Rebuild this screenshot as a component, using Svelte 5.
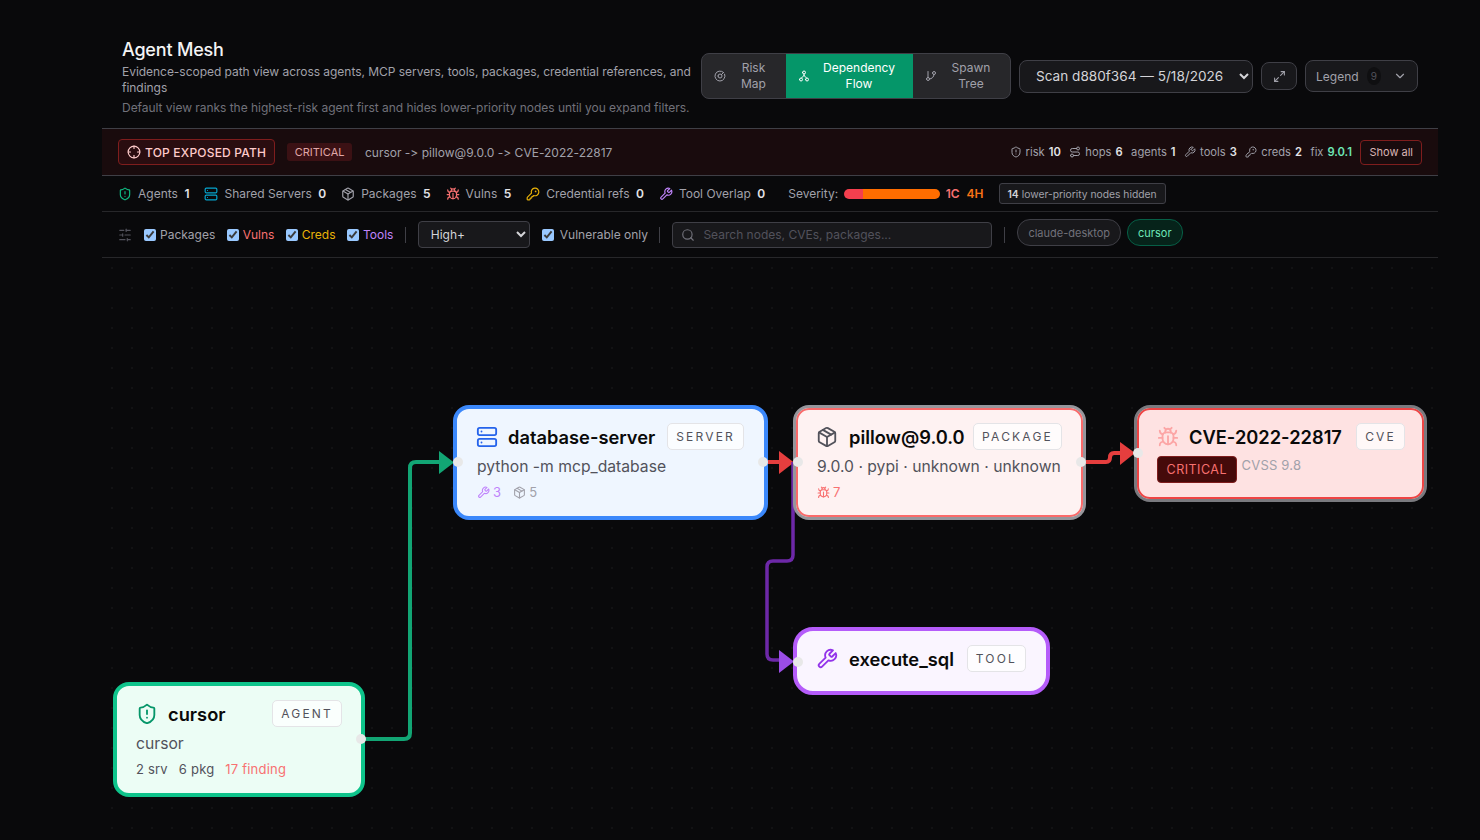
<script>
  const c = (x, y, r) => `M${x - r} ${y}a${r} ${r} 0 1 0 ${2 * r} 0a${r} ${r} 0 1 0 ${-2 * r} 0`;

  const icons = {
    shield: ['M20 13c0 5-3.5 7.5-7.66 8.95a1 1 0 0 1-.67-.01C7.5 20.5 4 18 4 13V6a1 1 0 0 1 1-1c2 0 4.5-1.2 6.24-2.72a1.17 1.17 0 0 1 1.52 0C14.51 3.81 17 5 19 5a1 1 0 0 1 1 1z', 'M12 8v4', 'M12 16h.01'],
    server: ['M4 2h16a2 2 0 0 1 2 2v4a2 2 0 0 1-2 2H4a2 2 0 0 1-2-2V4a2 2 0 0 1 2-2z', 'M4 14h16a2 2 0 0 1 2 2v4a2 2 0 0 1-2 2H4a2 2 0 0 1-2-2v-4a2 2 0 0 1 2-2z', 'M6 6h.01', 'M6 18h.01'],
    pkg: ['M11 21.73a2 2 0 0 0 2 0l7-4A2 2 0 0 0 21 16V8a2 2 0 0 0-1-1.73l-7-4a2 2 0 0 0-2 0l-7 4A2 2 0 0 0 3 8v8a2 2 0 0 0 1 1.73z', 'M12 22V12', 'M3.29 7 12 12l8.71-5', 'm7.5 4.27 9 5.15'],
    bug: ['m8 2 1.88 1.88', 'M14.12 3.88 16 2', 'M9 7.13v-1a3.003 3.003 0 1 1 6 0v1', 'M12 20c-3.3 0-6-2.7-6-6v-3a4 4 0 0 1 4-4h4a4 4 0 0 1 4 4v3c0 3.3-2.7 6-6 6', 'M12 20v-9', 'M6.53 9C4.6 8.8 3 7.1 3 5', 'M6 13H2', 'M3 21c0-2.1 1.7-3.9 3.8-4', 'M20.97 5c0 2.1-1.6 3.8-3.5 4', 'M22 13h-4', 'M17.2 17c2.1.1 3.8 1.9 3.8 4'],
    key: ['M2.586 17.414A2 2 0 0 0 2 18.828V21a1 1 0 0 0 1 1h3a1 1 0 0 0 1-1v-1a1 1 0 0 1 1-1h1a1 1 0 0 0 1-1v-1a1 1 0 0 1 1-1h.172a2 2 0 0 0 1.414-.586l.814-.814a6.5 6.5 0 1 0-4-4z', c(16.5, 7.5, 0.5)],
    wrench: ['M14.7 6.3a1 1 0 0 0 0 1.4l1.6 1.6a1 1 0 0 0 1.4 0l3.77-3.77a6 6 0 0 1-7.94 7.94l-6.91 6.91a2.12 2.12 0 0 1-3-3l6.91-6.91a6 6 0 0 1 7.94-7.94l-3.76 3.76z'],
    sliders: ['M21 4h-7', 'M10 4H3', 'M21 12h-9', 'M8 12H3', 'M21 20h-5', 'M12 20H3', 'M14 2v4', 'M8 10v4', 'M16 18v4'],
    search: [c(11, 11, 8), 'm21 21-4.3-4.3'],
    crosshair: [c(12, 12, 10), 'M22 12h-4', 'M6 12H2', 'M12 6V2', 'M12 22v-4'],
    route: [c(6, 19, 3), 'M9 19h8.5a3.5 3.5 0 0 0 0-7h-11a3.5 3.5 0 0 1 0-7H15', c(18, 5, 3)],
    radar: ['M19.07 4.93A10 10 0 1 0 21.31 8.35', c(12, 12, 4), 'm14.500 9.500 4.500-4.500'],
    flow: [c(12, 5, 3), c(6, 19, 3), c(18, 19, 3), 'M12 8v3', 'M12 11l-5 5', 'M12 11l5 5'],
    branch: ['M6 3v12', c(18, 6, 3), c(6, 18, 3), 'M18 9a9 9 0 0 1-9 9'],
    expand: ['M15 3h6v6', 'M9 21H3v-6', 'M21 3l-7 7', 'M3 21l7-7'],
    chevron: ['m6 9 6 6 6-6']
  };

  const tabs = [
    { label: 'Risk Map', icon: 'radar', width: 84 },
    { label: 'Dependency Flow', icon: 'flow', width: 127, active: true },
    { label: 'Spawn Tree', icon: 'branch', width: 97 }
  ];

  const pathStats = [
    { icon: 'shield', label: 'risk', value: '10' },
    { icon: 'route', label: 'hops', value: '6' },
    { label: 'agents', value: '1' },
    { icon: 'wrench', label: 'tools', value: '3' },
    { icon: 'key', label: 'creds', value: '2' }
  ];

  const stats = [
    { icon: 'shield', color: '#10b981', label: 'Agents', value: 1 },
    { icon: 'server', color: '#06a5cf', label: 'Shared Servers', value: 0 },
    { icon: 'pkg', color: '#a1a1aa', label: 'Packages', value: 5 },
    { icon: 'bug', color: '#f87171', label: 'Vulns', value: 5 },
    { icon: 'key', color: '#eab308', label: 'Credential refs', value: 0 },
    { icon: 'wrench', color: '#c084fc', label: 'Tool Overlap', value: 0 }
  ];

  const layers = [
    { label: 'Packages', cls: '' },
    { label: 'Vulns', cls: 'red' },
    { label: 'Creds', cls: 'yellow' },
    { label: 'Tools', cls: 'purple' }
  ];
</script>

{#snippet icon(name, size = 14)}
  <svg class="ic" width={size} height={size} viewBox="0 0 24 24" fill="none" stroke="currentColor" stroke-width="2" stroke-linecap="round" stroke-linejoin="round">
    {#each icons[name] as d}<path {d} />{/each}
  </svg>
{/snippet}

<div class="page">
  <header class="head">
    <div class="intro">
      <h1>Agent Mesh</h1>
      <p>Evidence-scoped path view across agents, MCP servers, tools, packages, credential references, and findings</p>
      <p class="hint">Default view ranks the highest-risk agent first and hides lower-priority nodes until you expand filters.</p>
    </div>
    <div class="controls">
      <div class="tabs">
        {#each tabs as tab}
          <button class="tab" class:active={tab.active} style="width: {tab.width}px">
            {@render icon(tab.icon, 12)}
            <span>{tab.label}</span>
          </button>
        {/each}
      </div>
      <select class="scan">
        <option>Scan d880f364 — 5/18/2026</option>
      </select>
      <button class="square">{@render icon('expand', 13)}</button>
      <button class="legend">
        Legend <span class="count">9</span>
        {@render icon('chevron', 14)}
      </button>
    </div>
  </header>

  <section class="exposed">
    <span class="top">{@render icon('crosshair', 14)} TOP EXPOSED PATH</span>
    <span class="crit">CRITICAL</span>
    <span class="trail">cursor -&gt; pillow@9.0.0 -&gt; CVE-2022-22817</span>
    <div class="path-stats">
      {#each pathStats as s}
        <span class="ps">
          {#if s.icon}{@render icon(s.icon, 12)}{/if}
          {s.label} <b>{s.value}</b>
        </span>
      {/each}
      <span class="ps">fix <b class="fix">9.0.1</b></span>
      <button class="show">Show all</button>
    </div>
  </section>

  <section class="stats">
    {#each stats as s}
      <span class="stat">
        <span class="stat-ic" style="color: {s.color}">{@render icon(s.icon, 14)}</span>
        {s.label} <b>{s.value}</b>
      </span>
    {/each}
    <span class="sev">
      Severity:
      <span class="bar"><i class="bar-c"></i><i class="bar-h"></i></span>
      <b class="c1">1C</b> <b class="h4">4H</b>
    </span>
    <span class="hidden-note"><b>14</b> lower-priority nodes hidden</span>
  </section>

  <section class="filters">
    <span class="slide">{@render icon('sliders', 14)}</span>
    {#each layers as l}
      <label class="check {l.cls}"><input type="checkbox" checked /> {l.label}</label>
    {/each}
    <span class="sep"></span>
    <select class="sev-select"><option>High+</option></select>
    <label class="check wide"><input type="checkbox" checked /> Vulnerable only</label>
    <span class="sep"></span>
    <div class="search">
      {@render icon('search', 14)}
      <input placeholder="Search nodes, CVEs, packages..." />
    </div>
    <span class="sep"></span>
    <span class="pill">claude-desktop</span>
    <span class="pill on">cursor</span>
  </section>

  <main class="canvas">
    <svg class="edges" width="1336" height="582" fill="none">
      <g transform="translate(-102 -258)">
        <path d="M361 739H404q6 0 6-6V468q0-6 6-6H441" stroke="#12a574" stroke-width="4" />
        <path d="M439 451 454 462.500 439 474z" fill="#12a574" />
        <path d="M763 462H781" stroke="#e53e3e" stroke-width="4" />
        <path d="M779 451 794 462.500 779 474z" fill="#e53e3e" />
        <path d="M1081 462H1106q4 0 4-4.500t4-4.500H1122" stroke="#e53e3e" stroke-width="4" />
        <path d="M1120 442 1135 453 1120 465z" fill="#e53e3e" />
        <path d="M793 462V555q0 6-6 6H773q-6 0-6 6V654q0 6 6 6H781" stroke="#6d28a8" stroke-width="3.500" />
        <path d="M779 650 794 661.500 779 673z" fill="#9b4de6" />
      </g>
    </svg>

    <article class="node server" style="left: 351px; top: 147px; width: 315px; height: 115px">
      <div class="row">
        <span class="node-ic">{@render icon('server', 22)}</span>
        <strong>database-server</strong>
        <span class="kind">SERVER</span>
      </div>
      <div class="sub">python -m mcp_database</div>
      <div class="meta">
        <span class="purple-t">{@render icon('wrench', 13)} 3</span>
        <span class="gray-t">{@render icon('pkg', 13)} 5</span>
      </div>
      <i class="dot" style="left: -4px; top: 48px"></i>
      <i class="dot" style="right: -4px; top: 48px"></i>
    </article>

    <article class="node pkg" style="left: 691px; top: 147px; width: 293px; height: 115px">
      <div class="row">
        <span class="node-ic">{@render icon('pkg', 22)}</span>
        <strong>pillow@9.0.0</strong>
        <span class="kind">PACKAGE</span>
      </div>
      <div class="sub">9.0.0 · pypi · unknown · unknown</div>
      <div class="meta">
        <span class="red-t">{@render icon('bug', 13)} 7</span>
      </div>
      <i class="dot" style="left: -3px; top: 49px"></i>
      <i class="dot" style="right: -3px; top: 49px"></i>
    </article>

    <article class="node cve" style="left: 1032px; top: 147px; width: 293px; height: 97px">
      <div class="row">
        <span class="node-ic">{@render icon('bug', 22)}</span>
        <strong>CVE-2022-22817</strong>
        <span class="kind">CVE</span>
      </div>
      <div class="sev-row">
        <span class="crit-tag">CRITICAL</span>
        <span class="cvss">CVSS 9.8</span>
      </div>
      <i class="dot" style="left: -4px; top: 40px"></i>
    </article>

    <article class="node tool" style="left: 691px; top: 369px; width: 257px; height: 68px">
      <div class="row">
        <span class="node-ic">{@render icon('wrench', 22)}</span>
        <strong>execute_sql</strong>
        <span class="kind">TOOL</span>
      </div>
      <i class="dot" style="left: -4px; top: 26px"></i>
    </article>

    <article class="node agent" style="left: 11px; top: 424px; width: 252px; height: 115px">
      <div class="row">
        <span class="node-ic">{@render icon('shield', 22)}</span>
        <strong>cursor</strong>
        <span class="kind">AGENT</span>
      </div>
      <div class="sub">cursor</div>
      <div class="meta">
        <span>2 srv</span>
        <span>6 pkg</span>
        <span class="red-t">17 finding</span>
      </div>
      <i class="dot" style="right: -5px; top: 48px"></i>
    </article>
  </main>
</div>

<style>
  :global(body) {
    background: #09090b;
    color-scheme: dark;
  }

  .page {
    width: 1336px;
    height: 840px;
    margin-left: 102px;
    font-family: Inter, "Liberation Sans", sans-serif;
    font-size: 12px;
    font-feature-settings: "calt" 0;
    color: #a1a1aa;
    overflow: visible;
  }

  button {
    font-family: inherit;
    font-feature-settings: inherit;
  }

  .ic {
    display: block;
    flex: none;
  }

  .head {
    display: flex;
    align-items: flex-start;
    justify-content: space-between;
    height: 128px;
    padding: 39px 20px 0;
    box-sizing: border-box;
  }

  .intro {
    width: 572px;
    letter-spacing: -0.035px;
  }

  h1 {
    margin: 0 0 3px;
    font-size: 18px;
    line-height: 22px;
    font-weight: 500;
    color: #f4f4f5;
    letter-spacing: -0.2px;
  }

  .intro p {
    margin: 0;
    line-height: 16px;
    color: #a1a1aa;
  }

  .intro .hint {
    margin-top: 4px;
    color: #71717a;
  }

  .controls {
    display: flex;
    align-items: center;
    gap: 8px;
    margin-top: 14px;
  }

  .tabs {
    display: flex;
    border: 1px solid #3f3f46;
    border-radius: 8px;
    background: #27272a;
    overflow: hidden;
  }

  .tab {
    display: flex;
    align-items: center;
    gap: 7px;
    height: 44px;
    padding: 0 12px;
    border: none;
    background: none;
    color: #a1a1aa;
    font-size: 12px;
    line-height: 16px;
    box-sizing: border-box;
  }

  .tab span {
    flex: 1;
    text-align: center;
  }

  .tab:not(.active) span {
    word-spacing: 100px;
  }

  .tab.active {
    background: #059669;
    color: #fff;
    padding: 0 12px;
  }

  .scan {
    width: 234px;
    height: 33px;
    padding: 0 8px 0 12px;
    border: 1px solid #3f3f46;
    border-radius: 8px;
    background: #18181b;
    color: #d4d4d8;
    font-family: inherit;
    font-size: 13.600px;
  }

  .square {
    display: flex;
    align-items: center;
    justify-content: center;
    width: 36px;
    height: 28px;
    padding: 0;
    border: 1px solid #3f3f46;
    border-radius: 8px;
    background: #18181b;
    color: #a1a1aa;
  }

  .legend {
    display: flex;
    align-items: center;
    gap: 8px;
    width: 113px;
    height: 32px;
    padding: 0 10px;
    border: 1px solid #3f3f46;
    border-radius: 8px;
    background: #18181b;
    color: #a1a1aa;
    font-size: 12px;
    box-sizing: border-box;
  }

  .count {
    display: flex;
    align-items: center;
    justify-content: center;
    width: 18px;
    height: 18px;
    border-radius: 50%;
    background: #0f0f11;
    color: #52525b;
    font-size: 10px;
  }

  .legend .ic {
    margin-left: 4px;
  }

  .exposed {
    display: flex;
    align-items: center;
    height: 48px;
    padding: 0 16px;
    box-sizing: border-box;
    border-top: 1px solid #3f3f46;
    border-bottom: 1px solid #3f3f46;
    background: #190b0d;
  }

  .top {
    display: flex;
    align-items: center;
    gap: 4px;
    height: 26px;
    padding: 0 8px;
    border: 1px solid #7f1d1d;
    border-radius: 4px;
    background: #2a0d10;
    color: #fecaca;
    font-size: 12px;
    font-weight: 500;
    letter-spacing: 0.2px;
    box-sizing: border-box;
  }

  .crit {
    margin-left: 12px;
    padding: 2px 7.500px;
    border-radius: 3px;
    background: #3b1114;
    color: #e0a8a8;
    font-size: 11px;
    line-height: 14px;
  }

  .trail {
    margin-left: 13px;
    color: #a1a1aa;
  }

  .path-stats {
    display: flex;
    align-items: center;
    gap: 8.500px;
    margin-left: auto;
    font-size: 11.200px;
    color: #a1a1aa;
  }

  .ps {
    display: flex;
    align-items: center;
    gap: 4px;
  }

  .ps b {
    color: #e4e4e7;
    font-weight: 600;
  }

  .ps .fix {
    color: #6ee7b7;
  }

  .show {
    height: 25px;
    padding: 0 8px;
    border: 1px solid #7f1d1d;
    border-radius: 4px;
    background: transparent;
    color: #d9b4b4;
    font-size: 11px;
  }

  .stats {
    display: flex;
    align-items: center;
    height: 36px;
    padding: 0 16px;
    box-sizing: border-box;
    border-bottom: 1px solid #27272a;
    gap: 15px;
  }

  .stat {
    display: flex;
    align-items: center;
    gap: 5px;
  }

  .stat b,
  .sev b {
    margin-left: 1.500px;
    color: #e4e4e7;
    font-weight: 600;
  }

  .stat-ic {
    margin-right: 1px;
  }

  .sev {
    display: flex;
    align-items: center;
    gap: 4px;
    margin-left: 8px;
  }

  .bar {
    display: flex;
    width: 96px;
    height: 10px;
    margin-left: 2px;
    border-radius: 5px;
    overflow: hidden;
  }

  .bar-c {
    width: 19px;
    background: #f43f4e;
  }

  .bar-h {
    flex: 1;
    background: #ff6d00;
  }

  .sev .c1 {
    color: #f87171;
  }

  .sev .h4 {
    margin-left: 3px;
    color: #f97316;
  }

  .hidden-note {
    display: flex;
    align-items: center;
    gap: 3px;
    height: 19px;
    padding: 0 8px;
    border: 1px solid #3f3f46;
    border-radius: 3px;
    background: #18181b;
    font-size: 10.300px;
    color: #a1a1aa;
  }

  .hidden-note b {
    color: #d4d4d8;
    font-weight: 600;
  }

  .filters {
    display: flex;
    align-items: center;
    height: 46px;
    padding: 0 16px;
    box-sizing: border-box;
    border-bottom: 1px solid #27272a;
  }

  .slide {
    margin-right: 12px;
    color: #52525b;
  }

  .check {
    display: flex;
    align-items: center;
    gap: 4px;
    margin-right: 11.400px;
    color: #a1a1aa;
  }

  .check.wide {
    gap: 6px;
  }

  .check input {
    width: 12px;
    height: 12px;
    margin: 0;
  }

  .check.red {
    color: #f87171;
  }

  .check.yellow {
    color: #eab308;
  }

  .check.purple {
    color: #c084fc;
  }

  .sep {
    width: 1px;
    height: 16px;
    margin-right: 12px;
    background: #3f3f46;
  }

  .sev-select {
    width: 112px;
    height: 27px;
    margin-right: 12px;
    padding: 0 6px 0 8px;
    border: 1px solid #3f3f46;
    border-radius: 4px;
    background: #18181b;
    color: #d4d4d8;
    font-family: inherit;
    font-size: 12px;
  }

  .search {
    display: flex;
    align-items: center;
    gap: 6px;
    width: 320px;
    height: 26px;
    margin-right: 12px;
    padding: 0 8px;
    border: 1px solid #3f3f46;
    border-radius: 4px;
    background: #18181b;
    color: #71717a;
    box-sizing: border-box;
  }

  .search input {
    flex: 1;
    min-width: 0;
    border: none;
    outline: none;
    background: none;
    color: #d4d4d8;
    font-family: inherit;
    font-size: 12px;
  }

  .search input::placeholder {
    color: #52525b;
  }

  .pill {
    display: flex;
    align-items: center;
    height: 25px;
    margin-right: 6px;
    margin-top: -4px;
    padding: 0 10px;
    border: 1px solid #3f3f46;
    border-radius: 13px;
    background: #18181b;
    color: #71717a;
    font-size: 11px;
  }

  .pill.on {
    border-color: #065f46;
    background: #06231a;
    color: #6ee7b7;
  }

  .canvas {
    position: relative;
    height: 582px;
    background-image: radial-gradient(#121214 1px, transparent 1px);
    background-size: 20px 20px;
  }

  .edges {
    position: absolute;
    left: 0;
    top: 0;
    overflow: visible;
  }

  .node {
    position: absolute;
    box-sizing: border-box;
    padding: 14px 20px;
    border: 4px solid;
    border-radius: 16px;
    color: #52525b;
    font-size: 15.700px;
  }

  .row {
    display: flex;
    align-items: center;
    height: 27px;
  }

  .node-ic {
    margin-left: -1px;
    margin-right: 10px;
  }

  .row strong {
    flex: 1;
    font-size: 18.300px;
    font-weight: 600;
    color: #0a0a0a;
    white-space: nowrap;
  }

  .kind {
    height: 27px;
    padding: 0 8px;
    border: 1px solid #e4e4e7;
    border-radius: 5px;
    background: rgba(255, 255, 255, 0.75);
    color: #52525b;
    font-size: 12px;
    line-height: 25px;
    letter-spacing: 2.200px;
    box-sizing: border-box;
  }

  .sub {
    margin-top: 6px;
    line-height: 22px;
    white-space: nowrap;
  }

  .meta {
    display: flex;
    gap: 12px;
    margin-top: 6px;
    font-size: 13px;
    line-height: 16px;
    letter-spacing: 0.2px;
  }

  .meta span {
    display: flex;
    align-items: center;
    gap: 3px;
  }

  .purple-t {
    color: #c084fc;
  }

  .gray-t {
    color: #a1a1aa;
  }

  .red-t {
    color: #f87171;
  }

  .server {
    border-color: #3b88fb;
    background: #eff6ff;
  }

  .server .node-ic {
    color: #2563eb;
  }

  .pkg {
    border: 3px solid #96969c;
    box-shadow: inset 0 0 0 2px #fa6a6a;
    background: #fef2f2;
    padding: 15px 21px;
  }

  .pkg .node-ic {
    margin-right: 11px;
    color: #52525b;
  }

  .cve {
    border: 3px solid #7a7a7f;
    box-shadow: inset 0 0 0 2px #ef4444;
    background: #fee2e2;
    padding: 15px 19px 15px 21px;
  }

  .cve .node-ic {
    color: #fca5a5;
  }

  .sev-row {
    display: flex;
    align-items: flex-start;
    gap: 5px;
    margin-top: 6px;
    margin-left: -1px;
  }

  .crit-tag {
    height: 27px;
    padding: 0 8.500px;
    border: 1px solid #7f1d1d;
    border-radius: 4px;
    background: #450a0a;
    color: #f87171;
    font-size: 12.500px;
    line-height: 26px;
    letter-spacing: 0.5px;
    box-sizing: border-box;
  }

  .cvss {
    color: #a1a1aa;
    font-size: 13px;
    line-height: 18px;
    letter-spacing: 0.2px;
  }

  .tool {
    border-color: #b55cfa;
    background: #faf5ff;
    padding: 14px 20px;
    border-radius: 20px;
  }

  .tool .node-ic {
    margin-right: 11px;
    color: #9333ea;
  }

  .agent {
    border-color: #0ec48b;
    background: #ecfdf5;
    padding: 14px 19px;
  }

  .agent .node-ic {
    margin-left: 0;
    color: #059669;
  }

  .agent .meta {
    gap: 11px;
  }

  .agent .meta span {
    display: inline;
  }

  .dot {
    position: absolute;
    width: 10px;
    height: 10px;
    border-radius: 50%;
    background: #e8e8e8;
  }
</style>
